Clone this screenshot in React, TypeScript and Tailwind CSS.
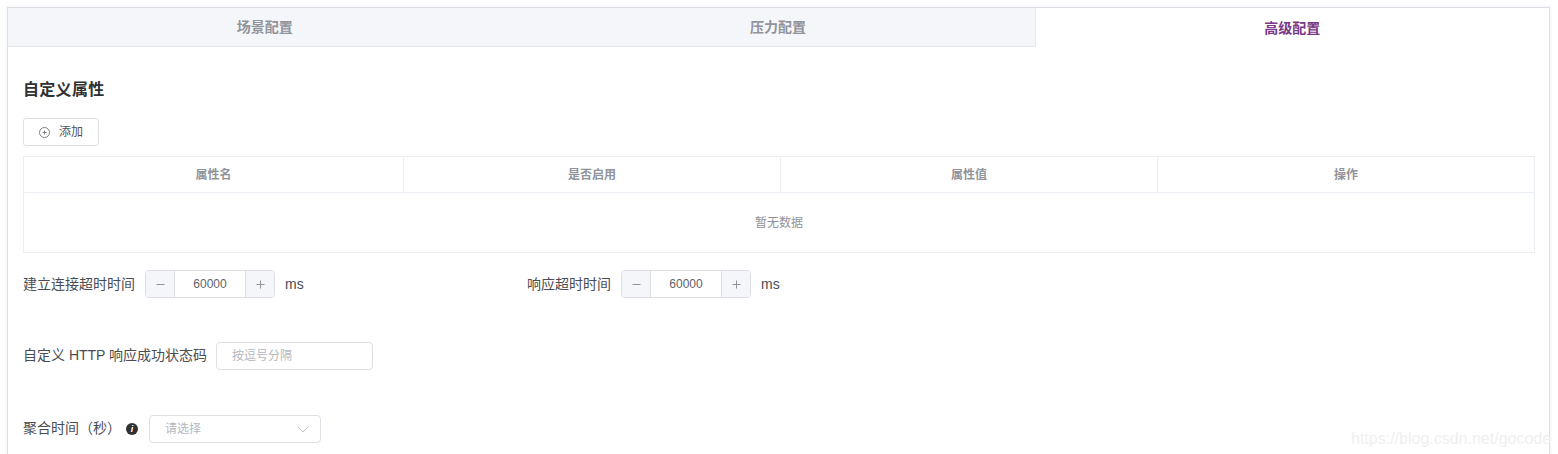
import React from 'react';

const font = "font-['Liberation_Sans','Noto_Sans_CJK_SC',sans-serif]";

const tabs = ['场景配置', '压力配置', '高级配置'];
const columns = ['属性名', '是否启用', '属性值', '操作'];

function NumberInput() {
  return (
    <div className="flex h-7 w-[130px] overflow-hidden rounded border border-[#dcdfe6] text-xs text-[#606266]">
      <span className="flex w-[29px] items-center justify-center border-r border-[#dcdfe6] bg-[#f5f6fa] text-[#909399]">
        <svg width="9" height="9" viewBox="0 0 9 9" fill="none" stroke="currentColor"><path d="M0.5 4.5h8" /></svg>
      </span>
      <span className="flex flex-1 items-center justify-center">60000</span>
      <span className="flex w-[29px] items-center justify-center border-l border-[#dcdfe6] bg-[#f5f6fa] text-[#909399]">
        <svg width="9" height="9" viewBox="0 0 9 9" fill="none" stroke="currentColor"><path d="M0.5 4.5h8M4.5 0.5v8" /></svg>
      </span>
    </div>
  );
}

export default function App() {
  return (
    <div className={`relative h-[454px] w-[1558px] overflow-hidden bg-white pl-[7px] pt-[7px] ${font}`}>
      <div className="h-[460px] w-[1543px] border border-[#dcdfe6] border-b-0 shadow-[0_0_3px_rgba(0,0,0,0.08)]">
        <div className="flex h-[39px]">
          {tabs.map((tab, i) => (
            <div
              key={tab}
              className={
                i === 2
                  ? 'flex flex-1 items-center justify-center border-l border-[#e4e7ed] bg-white text-sm font-bold text-[#783887]'
                  : 'flex flex-1 items-center justify-center border-b border-[#e4e7ed] bg-[#f5f6fa] text-sm font-bold text-[#909399]'
              }
            >
              {tab}
            </div>
          ))}
        </div>

        <div className="pl-[15px] pr-[14px]">
          <h2 className="mt-[33px] h-[20px] text-base/5 font-bold tracking-[0.3px] text-[#303133]">自定义属性</h2>
          <button className="mt-[18px] flex h-7 w-[76px] items-center justify-center gap-[9px] rounded-[3px] border border-[#dcdfe6] text-xs text-[#505258]">
            <svg width="11" height="11" viewBox="0 0 11 11" fill="none" stroke="#606266" strokeWidth="0.8">
              <circle cx="5.5" cy="5.5" r="5" />
              <path d="M3.5 5.5h4M5.5 3.5v4" />
            </svg>
            添加
          </button>

          <div className="mt-[10px] border border-[#ebeef5]">
            <div className="flex h-9 border-b border-[#ebeef5]">
              {columns.map((col, i) => (
                <div
                  key={col}
                  className={
                    i === 0
                      ? 'flex w-[379px] items-center justify-center text-xs font-bold text-[#909399]'
                      : 'flex w-[377px] items-center justify-center border-l border-[#ebeef5] text-xs font-bold text-[#909399]'
                  }
                >
                  {col}
                </div>
              ))}
            </div>
            <div className="flex h-[59px] items-center justify-center text-xs text-[#909399]">暂无数据</div>
          </div>

          <div className="mt-[17px] flex h-7 items-center text-sm text-[#4a4c52]">
            <div className="flex w-[504px] items-center">
              <span className="w-[122px]">建立连接超时时间</span>
              <NumberInput />
              <span className="ml-[10px]">ms</span>
            </div>
            <div className="flex items-center">
              <span className="w-[94px]">响应超时时间</span>
              <NumberInput />
              <span className="ml-[10px]">ms</span>
            </div>
          </div>

          <div className="mt-[44px] flex h-7 items-center text-sm text-[#4a4c52]">
            <span className="w-[193px] pb-[2px]">自定义 HTTP 响应成功状态码</span>
            <div className="flex h-7 w-[157px] items-center rounded border border-[#dcdfe6] pl-[15px] text-xs text-[#b4b7bf]">按逗号分隔</div>
          </div>

          <div className="mt-[45px] flex h-7 items-center text-sm text-[#4a4c52]">
            <span className="w-[103px] pb-[2px]">聚合时间（秒）</span>
            <span className="flex h-3 w-3 items-center justify-center rounded-full bg-[#303133] text-[9px] font-bold italic text-white">i</span>
            <div className="ml-[11px] flex h-7 w-[172px] items-center justify-between rounded border border-[#dcdfe6] pl-[15px] pr-[11px] text-xs text-[#b4b7bf]">
              请选择
              <svg width="12" height="7" viewBox="0 0 12 7" fill="none" stroke="#c0c4cc"><path d="M1 1l5 5 5-5" /></svg>
            </div>
          </div>
        </div>
      </div>

      <span className="absolute left-[1351px] top-[427px] whitespace-nowrap text-base text-[#efefef]">https://blog.csdn.net/gocode</span>
    </div>
  );
}
